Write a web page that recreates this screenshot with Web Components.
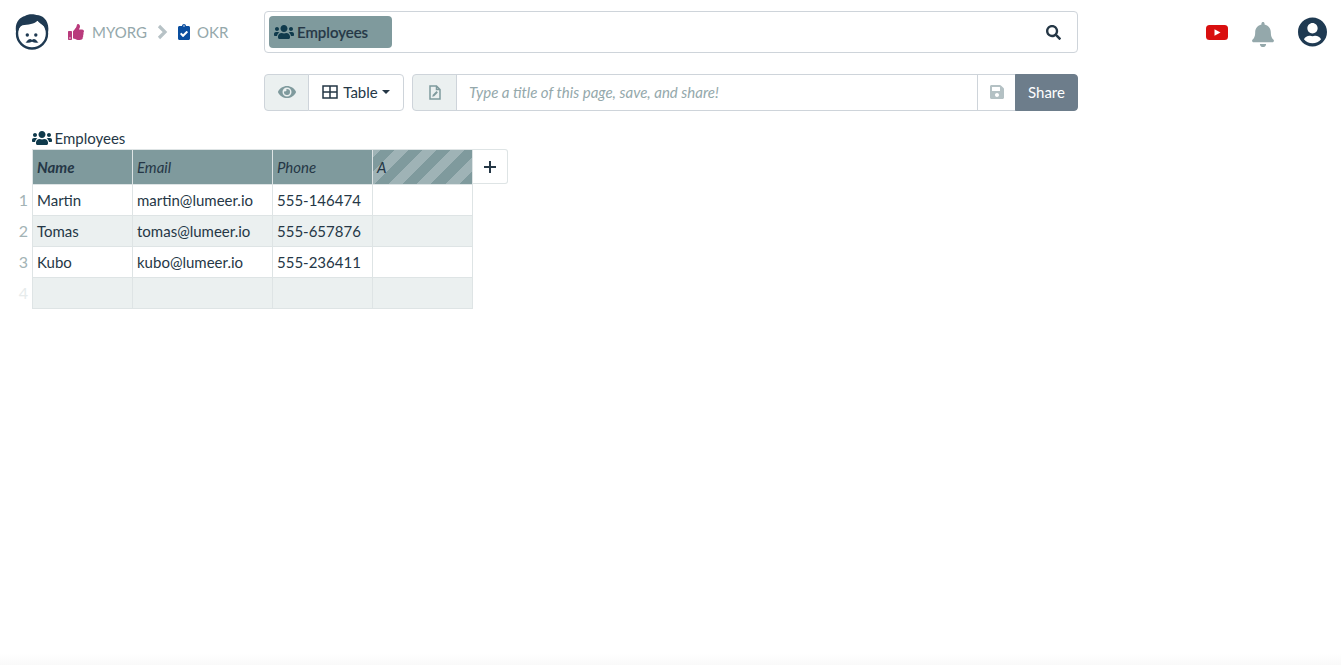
<!DOCTYPE html>
<html lang="en">
<head>
<meta charset="utf-8">
<title>Lumeer</title>
<style>
	html, body{
		margin: 0;
		height: 100%;
		background: #fff;
		font-family: Lato, "Liberation Sans", sans-serif;
		color: #253746;
	}
</style>
</head>
<body>
<lm-app></lm-app>
<script>
'use strict';

const PATHS = {
	users: ['0 0 640 512', 'M96 224c35.3 0 64-28.7 64-64s-28.7-64-64-64-64 28.7-64 64 28.7 64 64 64zm448 0c35.3 0 64-28.7 64-64s-28.7-64-64-64-64 28.7-64 64 28.7 64 64 64zm32 32h-64c-17.6 0-33.5 7.1-45.1 18.6 40.3 22.1 68.9 62 75.1 109.4h66c17.7 0 32-14.3 32-32v-32c0-35.3-28.7-64-64-64zm-256 0c61.9 0 112-50.1 112-112S381.9 32 320 32 208 82.1 208 144s50.1 112 112 112zm76.8 32h-8.3c-20.8 10-43.9 16-68.5 16s-47.6-6-68.5-16h-8.3C179.6 288 128 339.6 128 403.2V432c0 26.5 21.5 48 48 48h288c26.5 0 48-21.5 48-48v-28.8c0-63.6-51.6-115.2-115.2-115.2zm-223.7-13.4C161.5 263.1 145.6 256 128 256H64c-35.3 0-64 28.7-64 64v32c0 17.7 14.3 32 32 32h65.9c6.3-47.4 34.9-87.3 75.2-109.4z'],
	search: ['0 0 512 512', 'M505 442.7L405.3 343c-4.5-4.5-10.6-7-17-7H372c27.6-35.3 44-79.7 44-128C416 93.1 322.9 0 208 0S0 93.1 0 208s93.1 208 208 208c48.3 0 92.7-16.4 128-44v16.3c0 6.4 2.5 12.5 7 17l99.7 99.7c9.4 9.4 24.6 9.4 33.9 0l28.3-28.3c9.4-9.4 9.4-24.6.1-34zM208 336c-70.7 0-128-57.2-128-128 0-70.7 57.2-128 128-128 70.7 0 128 57.2 128 128 0 70.7-57.2 128-128 128z'],
	bell: ['0 0 448 512', 'M224 512c35.32 0 63.97-28.65 63.97-64H160.03c0 35.35 28.65 64 63.97 64zm215.39-149.71c-19.32-20.76-55.47-51.99-55.47-154.29 0-77.7-54.48-139.9-127.94-155.16V32c0-17.67-14.32-32-31.98-32s-31.98 14.33-31.98 32v20.84C118.56 68.1 64.08 130.3 64.08 208c0 102.3-36.15 133.53-55.47 154.29-6 6.45-8.66 14.16-8.61 21.71.11 16.4 12.98 32 32.1 32h383.8c19.12 0 32-15.6 32.1-32 .05-7.55-2.61-15.27-8.61-21.71z'],
	user: ['0 0 496 512', 'M248 8C111 8 0 119 0 256s111 248 248 248 248-111 248-248S385 8 248 8zm0 96c48.6 0 88 39.4 88 88s-39.4 88-88 88-88-39.4-88-88 39.4-88 88-88zm0 344c-58.7 0-111.3-26.6-146.5-68.2 18.8-35.4 55.6-59.8 98.5-59.8 2.4 0 4.8.4 7.1 1.1 13 4.2 26.6 6.9 40.9 6.9 14.3 0 28-2.7 40.9-6.9 2.3-.7 4.7-1.1 7.1-1.1 42.9 0 79.7 24.4 98.5 59.8C359.3 421.4 306.7 448 248 448z'],
	thumb: ['0 0 512 512', 'M104 224H24c-13.255 0-24 10.745-24 24v240c0 13.255 10.745 24 24 24h80c13.255 0 24-10.745 24-24V248c0-13.255-10.745-24-24-24zM64 472c-13.255 0-24-10.745-24-24s10.745-24 24-24 24 10.745 24 24-10.745 24-24 24zM384 81.452c0 42.416-25.97 66.208-33.277 94.548h101.723c33.397 0 59.397 27.746 59.553 58.098.084 17.938-7.546 37.249-19.439 49.197l-.11.11c9.836 23.337 8.237 56.037-9.308 79.469 8.681 25.895-.069 57.704-16.382 74.757 4.298 17.598 2.244 32.575-6.148 44.632C440.202 511.587 389.616 512 346.839 512l-2.845-.001c-48.287-.017-87.806-17.598-119.56-31.725-15.957-7.099-36.821-15.887-52.651-16.178-6.54-.12-11.783-5.457-11.783-11.998v-213.77c0-3.2 1.282-6.271 3.558-8.521 39.614-39.144 56.648-80.587 89.117-113.111 14.804-14.832 20.188-37.236 25.393-58.902C282.515 39.293 291.817 0 312 0c24 0 72 8 72 81.452z'],
	clipboard: ['0 0 384 512', 'M336 64h-80c0-35.3-28.7-64-64-64s-64 28.7-64 64H48C21.5 64 0 85.5 0 112v352c0 26.5 21.5 48 48 48h288c26.5 0 48-21.5 48-48V112c0-26.5-21.5-48-48-48zM192 40c13.3 0 24 10.7 24 24s-10.7 24-24 24-24-10.7-24-24 10.7-24 24-24zm121.2 231.8l-143 141.8c-4.7 4.7-12.3 4.6-17-.1l-82.6-83.3c-4.7-4.7-4.6-12.3.1-17L99.1 285c4.7-4.7 12.3-4.6 17 .1l46 46.4 106-105.2c4.7-4.7 12.3-4.6 17 .1l28.2 28.4c4.7 4.8 4.6 12.3-.1 17z'],
	eye: ['0 0 576 512', 'M572.52 241.4C518.29 135.59 410.93 64 288 64S57.68 135.64 3.48 241.41a32.35 32.35 0 0 0 0 29.19C57.71 376.41 165.07 448 288 448s230.32-71.64 284.52-177.41a32.35 32.35 0 0 0 0-29.19zM288 400a144 144 0 1 1 144-144 143.93 143.93 0 0 1-144 144zm0-240a95.31 95.31 0 0 0-25.31 3.79 47.85 47.85 0 0 1-66.9 66.9A95.78 95.78 0 1 0 288 160z'],
	save: ['0 0 448 512', 'M433.941 129.941l-83.882-83.882A48 48 0 0 0 316.118 32H48C21.49 32 0 53.49 0 80v352c0 26.51 21.49 48 48 48h352c26.51 0 48-21.49 48-48V163.882a48 48 0 0 0-14.059-33.941zM224 416c-35.346 0-64-28.654-64-64 0-35.346 28.654-64 64-64s64 28.654 64 64c0 35.346-28.654 64-64 64zm96-304.52V212c0 6.627-5.373 12-12 12H76c-6.627 0-12-5.373-12-12V108c0-6.627 5.373-12 12-12h228.52c3.183 0 6.235 1.264 8.485 3.515l3.48 3.48A11.996 11.996 0 0 1 320 111.48z']
};

class LmIcon extends HTMLElement {
	connectedCallback() {
		const [box, d] = PATHS[this.getAttribute('name')];
		const w = this.getAttribute('w') || 16;
		const h = this.getAttribute('h') || 16;
		this.attachShadow({ mode: 'open' }).innerHTML = `
			<style>:host{display:inline-flex;flex:none;}svg{display:block;}</style>
			<svg width="${w}" height="${h}" viewBox="${box}"><path fill="currentColor" d="${d}"/></svg>`;
	}
}
customElements.define('lm-icon', LmIcon);

let logoTemplate = document.createElement('template');
logoTemplate.innerHTML = `
	<style>
	:host{
		display: block;
		width: 34px;
		height: 36px;
	}
	svg{ display: block; }
	</style>
	<svg width="34" height="36" viewBox="0 0 34 36">
		<circle cx="17" cy="19.5" r="15" fill="#fff" stroke="#1f3a52" stroke-width="2.4"/>
		<path fill="#1f3a52" d="M1.2 18.5C-.8 9 4.500 3.200 10 2 12 0 19-.5 21.500 1 28.500 1.200 35 7.500 33 18.500L31.500 18C31 14.500 30 12.500 27.800 11.200 26 10 24 8.500 22.500 6.500 20 10 12.500 11 7.500 11.200 4.500 12.500 3.300 15 2.800 18.500z"/>
		<circle cx="12.300" cy="21" r="1.700" fill="#1f3a52"/>
		<circle cx="20.800" cy="21" r="1.700" fill="#1f3a52"/>
		<path fill="#1f3a52" d="M10.500 28.300c1.300-.4 2.300-3 4.500-3.300.8 0 1.500.4 2 .9.500-.5 1.200-.9 2-.9 2.200.3 3.200 2.900 4.500 3.300-2 .9-4.300.6-6.500-.6-2.200 1.200-4.500 1.500-6.500.6z"/>
	</svg>
`;
class LmLogo extends HTMLElement {
	constructor() {
		super();
		this.attachShadow({ mode: 'open' }).appendChild(logoTemplate.content.cloneNode(true));
	}
}
customElements.define('lm-logo', LmLogo);

let crumbsTemplate = document.createElement('template');
crumbsTemplate.innerHTML = `
	<style>
	:host{
		display: flex;
		align-items: center;
		font-size: 15px;
		color: #94a8ab;
	}
	.thumb{ color: #b93a7c; margin-right: 8px; }
	.clip{ color: #0a4e9f; margin-right: 7px; }
	svg{ display: block; margin: 0 10px 0 10px; }
	</style>
	<lm-icon class="thumb" name="thumb" w="16" h="16"></lm-icon>
	<span>MYORG</span>
	<svg width="11" height="16" viewBox="0 0 11 16"><path d="M2 2l6 6-6 6" fill="none" stroke="#b7c2c6" stroke-width="3.200"/></svg>
	<lm-icon class="clip" name="clipboard" w="12" h="16"></lm-icon>
	<span>OKR</span>
`;
class LmCrumbs extends HTMLElement {
	constructor() {
		super();
		this.attachShadow({ mode: 'open' }).appendChild(crumbsTemplate.content.cloneNode(true));
	}
}
customElements.define('lm-crumbs', LmCrumbs);

let searchTemplate = document.createElement('template');
searchTemplate.innerHTML = `
	<style>
	:host{
		display: flex;
		align-items: center;
		justify-content: space-between;
		box-sizing: border-box;
		height: 42px;
		padding: 0 16px 0 4px;
		border: 1px solid #ced4da;
		border-radius: 4px;
		background: #fff;
	}
	.chip{
		display: flex;
		align-items: center;
		gap: 3px;
		box-sizing: border-box;
		width: 123px;
		height: 32px;
		padding: 0 5px;
		border-radius: 4px;
		background: #7f9a9d;
		color: #253746;
		font-size: 15px;
		font-weight: 500;
		-webkit-text-stroke: .2px #253746;
	}
	.users{ color: #0f3a4c; }
	.search{ color: #253746; }
	</style>
	<span class="chip"><lm-icon class="users" name="users" w="20" h="16"></lm-icon>Employees</span>
	<lm-icon class="search" name="search" w="15" h="15"></lm-icon>
`;
class LmSearch extends HTMLElement {
	constructor() {
		super();
		this.attachShadow({ mode: 'open' }).appendChild(searchTemplate.content.cloneNode(true));
	}
}
customElements.define('lm-search', LmSearch);

let toolbarTemplate = document.createElement('template');
toolbarTemplate.innerHTML = `
	<style>
	:host{
		display: flex;
		gap: 8px;
		height: 37px;
		font-size: 15px;
	}
	.group{
		display: flex;
		height: 100%;
	}
	.grow{ flex: 1; }
	.cell{
		display: flex;
		align-items: center;
		justify-content: center;
		box-sizing: border-box;
		height: 100%;
		padding-bottom: 1px;
		border: 1px solid #ced4da;
		margin-left: -1px;
	}
	.cell:first-child{
		margin-left: 0;
		border-radius: 4px 0 0 4px;
	}
	.cell:last-child{ border-radius: 0 4px 4px 0; }
	.addon{
		width: 45px;
		background: #ebf0f0;
		color: #7f9a9d;
	}
	.table{
		width: 96px;
		gap: 5px;
		color: #253746;
		background: #fff;
	}
	.caret{
		width: 0;
		height: 0;
		margin-left: -1px;
		border: 4.5px solid transparent;
		border-top-color: #253746;
		border-bottom: 0;
	}
	.title{
		flex: 1;
		justify-content: flex-start;
		padding-left: 12px;
		color: #94a8ab;
		font-style: italic;
	}
	.save{
		width: 39px;
		color: #b4c1c4;
	}
	.share{
		width: 63px;
		background: #6d7d8b;
		border-color: #6d7d8b;
		color: #fff;
	}
	svg{ display: block; }
	</style>
	<div class="group">
		<div class="cell addon"><lm-icon name="eye" w="18" h="16"></lm-icon></div>
		<div class="cell table">
			<svg width="16" height="14" viewBox="0 0 16 14"><path d="M1 1h14v12H1zM1 7h14M8 1v12" fill="none" stroke="#253746" stroke-width="1.500"/></svg>
			Table<span class="caret"></span>
		</div>
	</div>
	<div class="group grow">
		<div class="cell addon">
			<svg width="12" height="15" viewBox="0 0 12 15"><path d="M1 1h6.500L11 4.500V14H1z M7.500 1v3.500H11" fill="none" stroke="#7f9a9d" stroke-width="1.500"/><path d="M3.200 11.800 3.800 9.800 7.500 6.100l1.400 1.400-3.700 3.700z" fill="#7f9a9d"/></svg>
		</div>
		<div class="cell title">Type a title of this page, save, and share!</div>
		<div class="cell save"><lm-icon name="save" w="14" h="16"></lm-icon></div>
		<div class="cell share">Share</div>
	</div>
`;
class LmToolbar extends HTMLElement {
	constructor() {
		super();
		this.attachShadow({ mode: 'open' }).appendChild(toolbarTemplate.content.cloneNode(true));
	}
}
customElements.define('lm-toolbar', LmToolbar);

let tableTemplate = document.createElement('template');
tableTemplate.innerHTML = `
	<style>
	:host{
		display: block;
		font-size: 15px;
		color: #253746;
	}
	.caption{
		display: flex;
		align-items: center;
		gap: 2.5px;
		height: 21px;
		margin: 0 0 1px 32px;
	}
	.caption lm-icon{ color: #0f3a4c; }
	.grid{
		display: grid;
		grid-template-columns: 32px 101px 140px 100px 100px 35px;
		grid-template-rows: 36px;
		grid-auto-rows: 31px;
		width: max-content;
	}
	.num{
		display: flex;
		align-items: center;
		justify-content: flex-end;
		padding: 0 4px 2px 0;
		font-size: 16px;
		color: #a3b3b5;
	}
	.num.faint{ color: #e6ebeb; }
	.td, .th{
		display: flex;
		align-items: center;
		box-sizing: border-box;
		padding: 0 4px;
		border-right: 1px solid #dee4e5;
		border-bottom: 1px solid #dee4e5;
		white-space: nowrap;
	}
	.td.first, .th.first{ border-left: 1px solid #dee4e5; }
	.th{
		background: #7f9a9d;
		font-style: italic;
		border-top: 1px solid #dee4e5;
		padding-bottom: 1px;
	}
	.th.name{ font-weight: 700; }
	.th.stripes{
		background: repeating-linear-gradient(135deg, #9fb3b6 0, #9fb3b6 5px, #7f9a9d 5px, #7f9a9d 15px, #9fb3b6 15px, #9fb3b6 20px);
	}
	.odd{ background: #fff; }
	.even{ background: #ebf0f0; }
	.add{
		display: flex;
		align-items: center;
		justify-content: center;
		box-sizing: border-box;
		height: 35px;
		border: 1px solid #dee4e5;
		border-left: 0;
		border-radius: 0 3px 3px 0;
	}
	</style>
	<div class="caption"><lm-icon name="users" w="20" h="16"></lm-icon>Employees</div>
	<div class="grid"></div>
`;
class LmTable extends HTMLElement {
	constructor() {
		super();
		let root = this.attachShadow({ mode: 'open' });
		root.appendChild(tableTemplate.content.cloneNode(true));
		const rows = [
			['Martin', 'martin@lumeer.io', '555-146474', ''],
			['Tomas', 'tomas@lumeer.io', '555-657876', ''],
			['Kubo', 'kubo@lumeer.io', '555-236411', ''],
			['', '', '', '']
		];
		let html = `<span></span>
			<div class="th first name">Name</div><div class="th">Email</div><div class="th">Phone</div><div class="th stripes">A</div>
			<div class="add"><svg width="12" height="12" viewBox="0 0 12 12"><path d="M6 0v12M0 6h12" stroke="#253746" stroke-width="2"/></svg></div>`;
		rows.forEach((row, i) => {
			html += `<div class="num${i === 3 ? ' faint' : ''}">${i + 1}</div>`;
			row.forEach((value, c) => {
				html += `<div class="td ${i % 2 ? 'even' : 'odd'}${c ? '' : ' first'}">${value}</div>`;
			});
			html += '<span></span>';
		});
		root.querySelector('.grid').innerHTML = html;
	}
}
customElements.define('lm-table', LmTable);

let appTemplate = document.createElement('template');
appTemplate.innerHTML = `
	<style>
	:host{
		display: block;
		min-height: 100vh;
		box-sizing: border-box;
		background: linear-gradient(#fff, #f9f9f9) no-repeat bottom / 100% 12px;
	}
	.top{
		display: grid;
		grid-template-columns: 264px 814px 1fr;
		padding-top: 11px;
	}
	.brand{
		display: flex;
		align-items: center;
		padding-left: 15px;
		gap: 19px;
	}
	.actions{
		display: flex;
		align-items: center;
		padding-left: 128px;
	}
	.yt{ display: block; margin-right: 24px; }
	.bell{ color: #94a8ab; margin: 4px 24px 0 0; }
	.me{ color: #1f3a52; }
	.bar{
		margin: 21px 263px 0 264px;
	}
	.content{ padding-top: 16px; }
	</style>
	<div class="top">
		<div class="brand"><lm-logo></lm-logo><lm-crumbs></lm-crumbs></div>
		<lm-search></lm-search>
		<div class="actions">
			<svg class="yt" width="22" height="15" viewBox="0 0 22 15"><rect width="22" height="15" rx="3.500" fill="#d90f0f"/><path d="M8.500 4.200 14.500 7.500 8.500 10.800z" fill="#fff"/></svg>
			<lm-icon class="bell" name="bell" w="22" h="25"></lm-icon>
			<lm-icon class="me" name="user" w="29" h="30"></lm-icon>
		</div>
	</div>
	<lm-toolbar class="bar"></lm-toolbar>
	<div class="content"><lm-table></lm-table></div>
`;
class LmApp extends HTMLElement {
	constructor() {
		super();
		this.attachShadow({ mode: 'open' }).appendChild(appTemplate.content.cloneNode(true));
	}
}
customElements.define('lm-app', LmApp);
</script>
</body>
</html>
